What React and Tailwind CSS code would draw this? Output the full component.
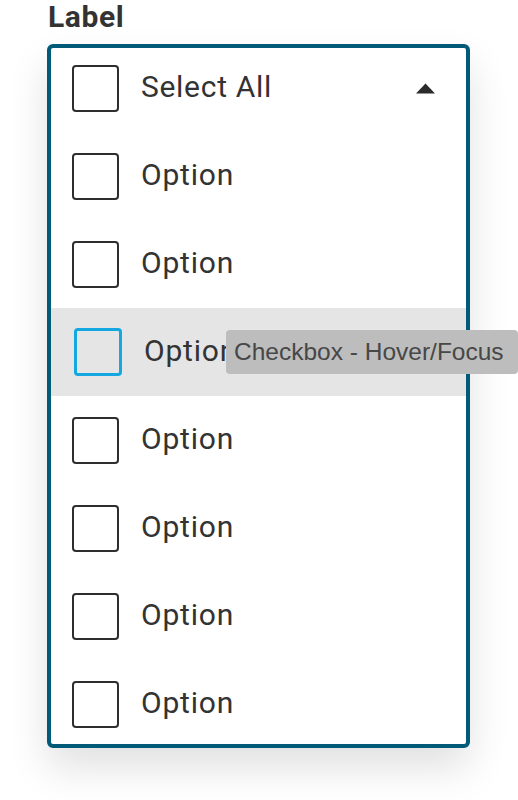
import React from 'react';

const options = ['Option', 'Option', 'Option', 'Option', 'Option', 'Option', 'Option'];

function Box({ focus }) {
  return (
    <span
      className={
        focus
          ? 'w-[48px] h-[48px] shrink-0 rounded-[4px] border-[3px] border-[#14a8e0] ml-[2px]'
          : 'w-[47px] h-[47px] shrink-0 rounded-[4px] border-2 border-[#2e2e2e] bg-white'
      }
    />
  );
}

export default function App() {
  return (
    <div className="w-[518px] h-[800px] bg-white font-['Roboto',sans-serif] text-[#333333] overflow-hidden">
      <div className="pl-[48px] text-[30px] leading-[34px] tracking-[0.6px] font-bold text-[#333333]">Label</div>
      <div className="ml-[47px] mt-[10px] w-[423px] border-[4px] border-[#005a78] rounded-[6px] bg-white shadow-[0_20px_40px_rgba(0,0,0,0.12)]">
        <div className="-my-[4px]">
          <div className="h-[88px] flex items-center pl-[21px] pr-[31px]">
            <Box />
            <span className="ml-[22px] mb-[4px] text-[30px] tracking-[0.7px] flex-1">Select All</span>
            <svg width="19" height="11" viewBox="0 0 19 11">
              <path d="M0 10.5 L9.5 0.5 L19 10.5 Z" fill="#2b2b2b" />
            </svg>
          </div>
          {options.map((o, i) => {
            const hover = i === 2;
            return (
              <div key={i} className={`relative h-[88px] flex items-center pl-[21px] ${hover ? 'bg-[#e5e5e5]' : ''}`}>
                <Box focus={hover} />
                <span className="ml-[22px] mb-[4px] text-[30px] tracking-[0.8px]">{o}</span>
                {hover && (
                  <div className="absolute left-[175px] top-[22px] h-[44px] w-[292px] rounded-[4px] bg-[#bdbdbd] text-[#474747] text-[24.5px] font-['Liberation_Sans',sans-serif] flex items-center pl-[8px]">
                    Checkbox - Hover/Focus
                  </div>
                )}
              </div>
            );
          })}
        </div>
      </div>
    </div>
  );
}
